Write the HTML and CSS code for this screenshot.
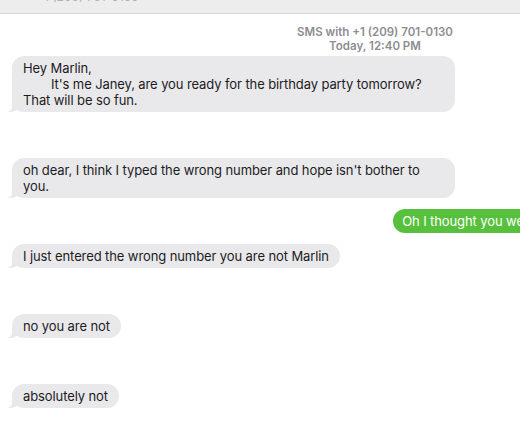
FILE: index.html
```html
<!DOCTYPE html>
<html>
<head>
<meta charset="utf-8">
<link rel="stylesheet" href="styles.css">
</head>
<body>
<div class="topbar"><span class="topbar-text">+1 (209) 701-0130</span></div>
<div class="thread">
  <div class="meta">
    <div>SMS with +1 (209) 701-0130</div>
    <div>Today, 12:40 PM</div>
  </div>
  <div class="row in first"><div class="bubble">Hey Marlin,<br><span class="tab"></span>It's me Janey, are you ready for the birthday party tomorrow? That will be so fun.</div></div>
  <div class="row in gap"><div class="bubble">oh dear, I think I typed the wrong number and hope isn't bother to you.</div></div>
  <div class="row out near"><div class="bubble green">Oh I thought you were Marlin</div></div>
  <div class="row in near"><div class="bubble">I just entered the wrong number you are not Marlin</div></div>
  <div class="row in gap"><div class="bubble">no you are not</div></div>
  <div class="row in gap"><div class="bubble">absolutely not</div></div>
</div>
</body>
</html>
```
FILE: styles.css
```css
html, body {
  margin: 0;
  padding: 0;
  background: #ffffff;
  overflow: hidden;
}
body {
  width: 520px;
  height: 421px;
  font-family: Inter, "Liberation Sans", sans-serif;
  font-size: 13px;
  color: #1c1c1e;
}
.topbar {
  height: 13px;
  background: #ededed;
  border-bottom: 1px solid #d6d6d6;
  overflow: hidden;
}
.topbar-text {
  display: block;
  margin-left: 36px;
  margin-top: -10px;
  font-size: 12px;
  color: #b0b0b0;
  line-height: 14px;
}
.thread {
  padding: 11px 0 0 12px;
}
.meta {
  width: 200px;
  margin-left: 263px;
  text-align: center;
  font-size: 11.5px;
  font-weight: 600;
  line-height: 14px;
  color: #8d8d92;
}
.row {
  display: flex;
}
.row.first { margin-top: 3px; }
.row.gap { margin-top: 46px; }
.row.near { margin-top: 11px; }
.row.out { justify-content: flex-end; margin-right: -68px; }
.bubble {
  position: relative;
  max-width: 443px;
  box-sizing: border-box;
  background: #e9e9eb;
  border-radius: 12px;
  padding: 4px 11px;
  line-height: 16px;
  letter-spacing: -0.1px;
}
.in .bubble::before {
  content: "";
  position: absolute;
  left: -4px;
  bottom: 0;
  width: 12px;
  height: 12px;
  background: #e9e9eb;
  border-bottom-right-radius: 10px 8px;
}
.in .bubble::after {
  content: "";
  position: absolute;
  left: -8px;
  bottom: 0;
  width: 8px;
  height: 14px;
  background: #ffffff;
  border-bottom-right-radius: 6px 5px;
}
.bubble.green {
  background: #57c13d;
  color: #ffffff;
  white-space: nowrap;
  padding-left: 9px;
}
.tab {
  display: inline-block;
  width: 28px;
}
```
